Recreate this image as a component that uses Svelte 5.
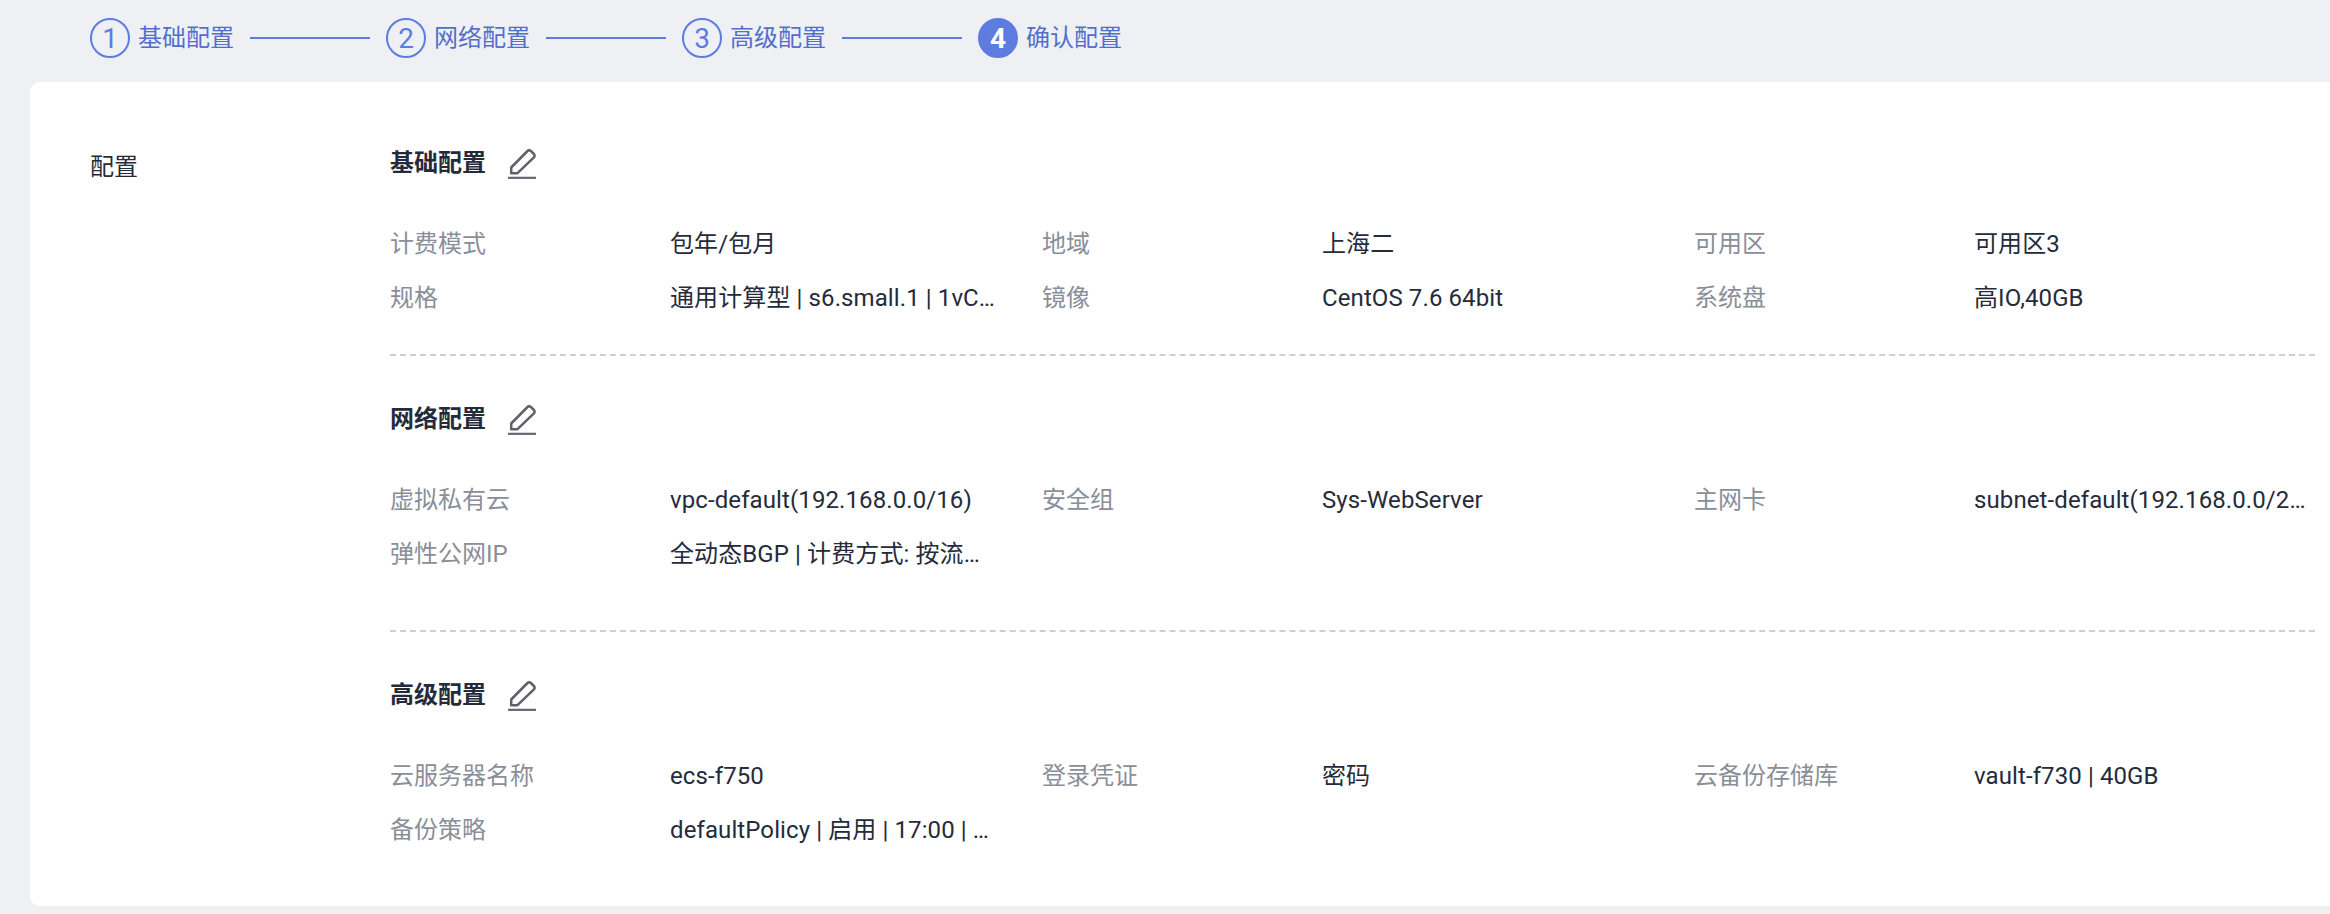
<script>
	const steps = [
		{ n: 1, label: '基础配置' },
		{ n: 2, label: '网络配置' },
		{ n: 3, label: '高级配置' },
		{ n: 4, label: '确认配置', active: true }
	];

	const sections = [
		{
			title: '基础配置',
			items: [
				['计费模式', '包年/包月'],
				['地域', '上海二'],
				['可用区', '可用区3'],
				['规格', '通用计算型 | s6.small.1 | 1vCPU | 1GB'],
				['镜像', 'CentOS 7.6 64bit'],
				['系统盘', '高IO,40GB']
			]
		},
		{
			title: '网络配置',
			tall: true,
			items: [
				['虚拟私有云', 'vpc-default(192.168.0.0/16)'],
				['安全组', 'Sys-WebServer'],
				['主网卡', 'subnet-default(192.168.0.0/2…'],
				['弹性公网IP', '全动态BGP | 计费方式: 按流量计费 | 5 Mbit/s']
			]
		},
		{
			title: '高级配置',
			items: [
				['云服务器名称', 'ecs-f750'],
				['登录凭证', '密码'],
				['云备份存储库', 'vault-f730 | 40GB'],
				['备份策略', 'defaultPolicy | 启用 | 17:00 | 周一至周日']
			]
		}
	];
</script>

<div class="page">
	<div class="steps">
		{#each steps as step, i}
			{#if i > 0}
				<span class="line"></span>
			{/if}
			<div class="step">
				<span class="num" class:active={step.active}>{step.n}</span>
				<span class="step-label">{step.label}</span>
			</div>
		{/each}
	</div>

	<div class="card">
		<div class="side">配置</div>
		<div class="content">
			{#each sections as section, i}
				<section class="section" class:tall={section.tall} class:last={i === sections.length - 1}>
					<div class="head">
						<h3>{section.title}</h3>
						<svg class="edit" viewBox="0 0 29 31" width="29" height="31" aria-hidden="true">
							<path d="M3.2 19.5 L19.5 3 a2.4 2.4 0 0 1 3.4 0 l3 3 a2.4 2.4 0 0 1 0 3.4 L9.5 25.2 H3.2 Z" fill="none" stroke="#5f6068" stroke-width="2.5" stroke-linejoin="round" />
							<path d="M0 30 H28" stroke="#6b6d78" stroke-width="2.6" />
						</svg>
					</div>
					<div class="grid">
						{#each section.items as [label, value]}
							<div class="item">
								<span class="label">{label}</span>
								<span class="value">{value}</span>
							</div>
						{/each}
					</div>
				</section>
			{/each}
		</div>
	</div>
</div>

<style>
	:global(body) {
		margin: 0;
		background: #eef0f4;
	}

	.page {
		height: 914px;
		overflow: hidden;
		font-family: Roboto, 'Noto Sans CJK SC', sans-serif;
		font-size: 24px;
		color: #252b3a;
	}

	.steps {
		display: flex;
		align-items: center;
		height: 40px;
		padding: 18px 0 24px 90px;
	}

	.step {
		display: flex;
		align-items: center;
		gap: 8px;
	}

	.num {
		box-sizing: border-box;
		width: 40px;
		height: 40px;
		display: flex;
		align-items: center;
		justify-content: center;
		border: 2px solid #5e7ce0;
		border-radius: 50%;
		color: #5e7ce0;
		font-size: 28px;
	}

	.num.active {
		background: #5e7ce0;
		color: #fff;
		font-weight: 700;
	}

	.step-label {
		color: #526ecc;
		line-height: 40px;
	}

	.line {
		width: 120px;
		height: 2px;
		margin: 0 16px;
		background: #5e7ce0;
	}

	.card {
		display: flex;
		height: 824px;
		margin-left: 30px;
		box-sizing: border-box;
		background: #fff;
		border-radius: 10px 0 0 10px;
		padding: 63px 15px 0 60px;
	}

	.side {
		width: 300px;
		flex: none;
		line-height: 36px;
		margin-top: 4px;
	}

	.content {
		flex: 1;
		min-width: 0;
	}

	.section {
		padding-bottom: 39px;
		border-bottom: 2px dashed #cdcfd4;
		margin-bottom: 45px;
	}

	.section.tall {
		padding-bottom: 59px;
	}

	.section.last {
		border-bottom: none;
		padding-bottom: 0;
		margin-bottom: 0;
	}

	.head {
		display: flex;
		align-items: center;
		gap: 22px;
		height: 36px;
		margin-bottom: 46px;
	}

	h3 {
		margin: 0;
		font-size: 24px;
		font-weight: 600;
		line-height: 36px;
	}

	.edit {
		display: block;
		flex: none;
	}

	.grid {
		display: grid;
		grid-template-columns: repeat(3, 632px);
		column-gap: 20px;
		row-gap: 20px;
	}

	.item {
		display: flex;
		line-height: 34px;
		min-width: 0;
	}

	.label {
		flex: none;
		width: 280px;
		color: #8a8e99;
	}

	.value {
		width: 330px;
		letter-spacing: 0.1px;
		white-space: nowrap;
		overflow: hidden;
		text-overflow: ellipsis;
	}

	.item:nth-child(3n) .value {
		width: 352px;
	}
</style>
